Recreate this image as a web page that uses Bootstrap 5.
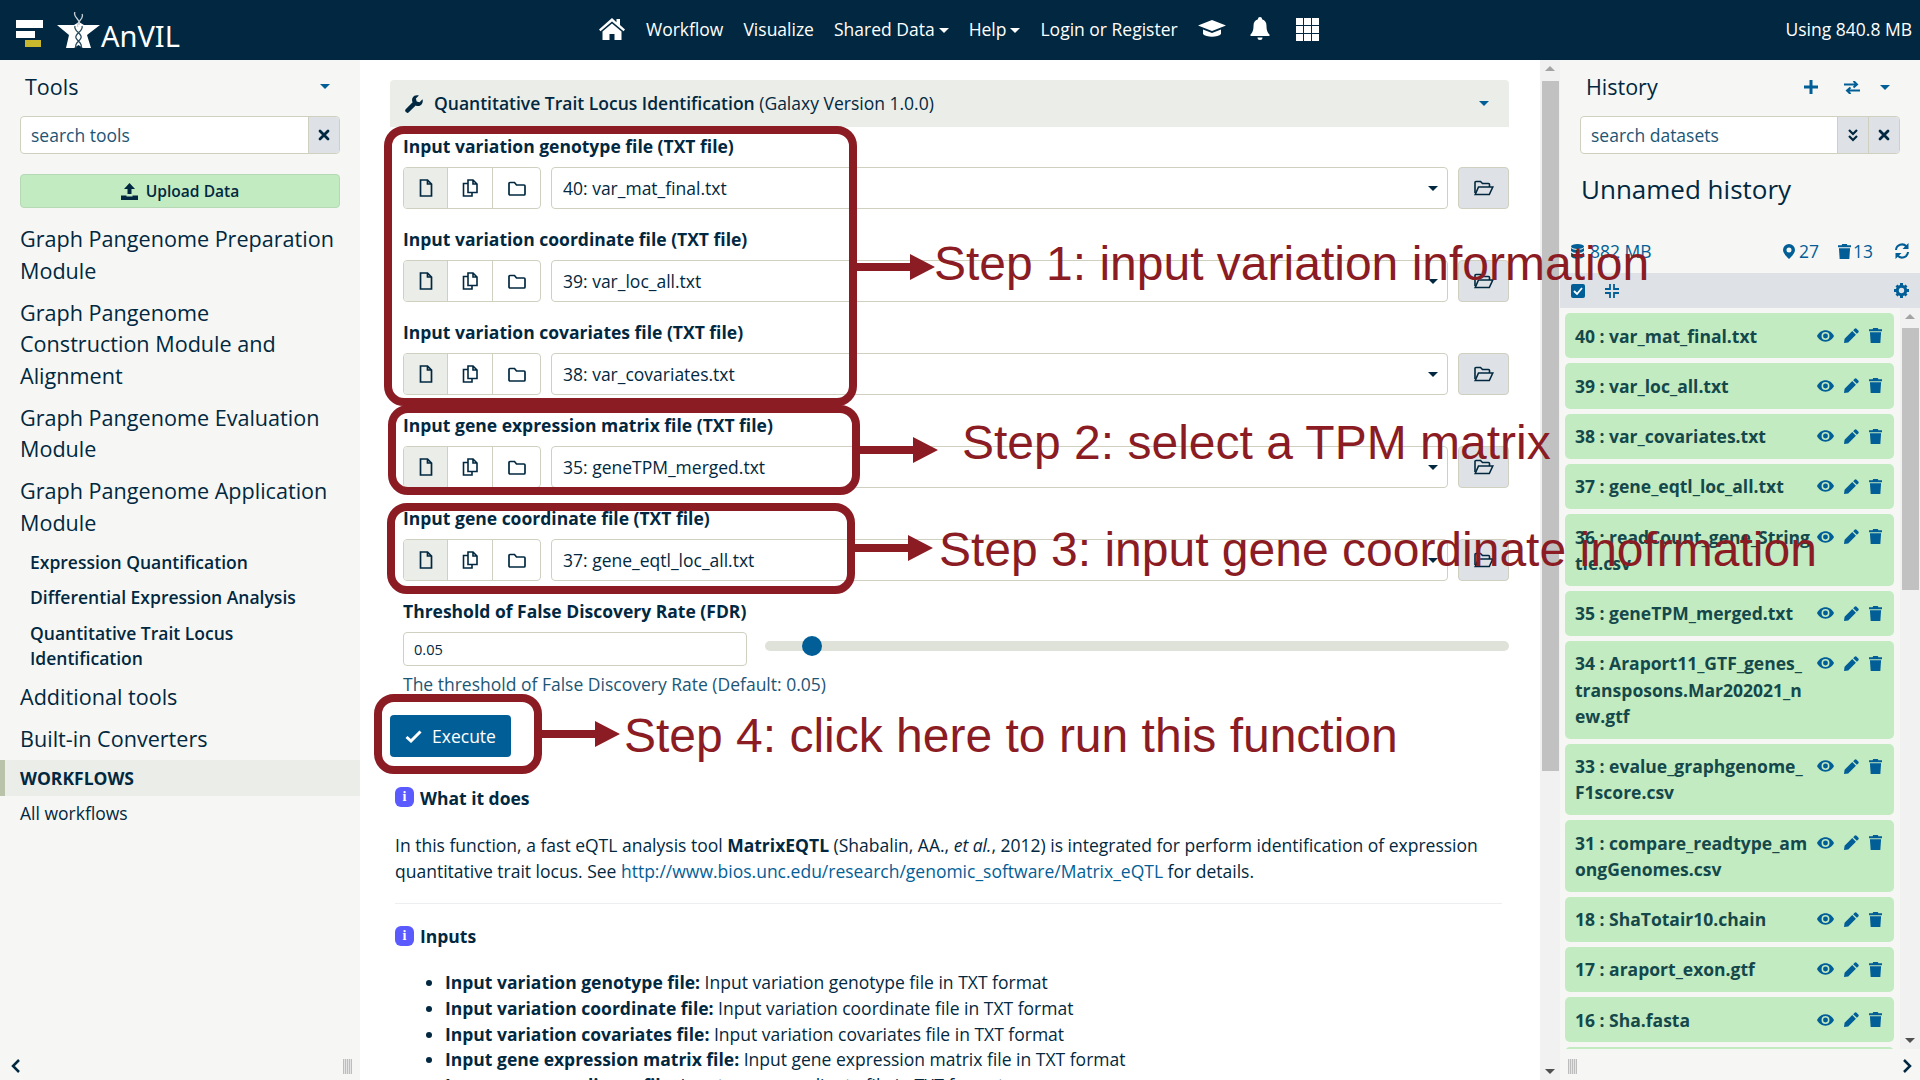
<!DOCTYPE html>
<html lang="en">
<head>
<meta charset="UTF-8">
<title>Galaxy</title>
<link href="https://cdn.jsdelivr.net/npm/bootstrap@5.3.0/dist/css/bootstrap.min.css" rel="stylesheet">
<style>
html, body { height: 100%; overflow: hidden; }
body { font-family: "Open Sans", "Noto Sans", sans-serif; font-size: 17.5px; line-height: 26.25px; color: #012840; background: #fff; }
svg { display: block; flex: none; }
a { text-decoration: none; }

/* masthead */
.top-bar { height: 60px; background: #012840; color: #fff; padding: 0 8px 0 16px; position: relative; }
.top-menu { position: absolute; left: 598px; top: 0; height: 58px; gap: 20px; }
.top-menu a { color: #fff; white-space: nowrap; }
.top-menu .grid-ico { margin-left: 6px; }
.top-used { margin-bottom: 2px; }
.caret-s { display: inline-block; width: 0; height: 0; border: 5px solid transparent; border-top-color: currentColor; border-bottom: 0; margin-left: 4px; vertical-align: 3px; }
.caret-blue { color: #025e96; margin: 0; }
.burger { margin-top: 20px; }
.logo-star { margin: 12px 0 0 13px; }
.logo-word { font-family: "Noto Sans", sans-serif; font-size: 29px; line-height: 30px; margin: 21px 0 0 0; color: #fff; }

.app-body { height: 1020px; }

/* side panels */
.side-l { width: 360px; background: #f6f7f4; position: relative; flex: none; }
.side-r { width: 360px; background: #f6f7f4; position: relative; flex: none; }
.panel-title { font-size: 21.5px; line-height: 28px; }
.panel-head-l { height: 56px; padding: 13px 30px 0 25px; }
.panel-head-l .caret-s { margin-top: 11px; }
.panel-head-r { height: 56px; padding: 13px 30px 0 26px; }
.hist-acts { padding-top: 7px; }
.hist-acts .act-swap { margin: 0 20px 0 26px; }
.search-box { height: 38px; margin: 0 20px; border: 1px solid #cfd0bf; border-radius: 4px; overflow: hidden; background: #fff; }
.search-box span.ph { flex: 1; padding: 5px 10px; color: #1d5575; }
.search-x { width: 31px; background: #dee2e6; border-left: 1px solid #cfd0bf; }
.up-btn { margin: 20px 20px 0; height: 34px; background: #c2ebc2; border: 1px solid #b4d9b4; border-radius: 4px; font-weight: 600; font-size: 15.6px; gap: 8px; }
.tool-tree { margin-top: 15px; }
.tool-sect { font-size: 21.6px; line-height: 31.5px; padding: 0 20px; margin-bottom: 10.5px; color: #012840; }
.tool-sub { font-weight: 600; line-height: 25px; padding: 0 20px 0 30px; margin-bottom: 10.5px; }
.tool-sub.first-sub { margin-top: 11.5px; }
.tool-sect.last-sect { margin-bottom: 5px; }
.wf-bar { height: 36px; background: #ebede8; border-left: 5px solid #b9c3a9; padding-left: 15px; font-weight: 700; line-height: 36px; }
.wf-link { padding: 4px 20px 0; }
.grip { width: 9px; height: 15px; background: repeating-linear-gradient(90deg, #bdbdbd 0 1px, #e4e4e4 1px 2px); }
.panel-foot { position: absolute; bottom: 6px; left: 11px; right: 8px; }
.panel-foot.foot-r { left: 8px; }

/* centre */
.centre { flex: 1; min-width: 0; position: relative; overflow: hidden; }
.centre-inner { padding: 20px 31px 0 30px; }
.tool-head { height: 47px; background: #ebede8; border-radius: 4px 4px 0 0; padding: 0 20px 0 15px; gap: 11px; }
.tool-head b { font-weight: 600; }
.field-wrap { padding: 7px 0 0 13px; }
.field-row { margin-bottom: 18px; }
.field-label { font-weight: 700; line-height: 24px; margin-bottom: 9px; }
.btn-trio { width: 138px; height: 42px; border: 1px solid #cfd0bf; border-radius: 4px; overflow: hidden; flex: none; }
.btn-trio span { flex: 1; border-left: 1px solid #cfd0bf; }
.btn-trio span:first-child { border-left: 0; background: #ebede8; flex: 0 0 43px; }
.btn-trio span:nth-child(2) { flex: 0 0 45px; }
.pick-box { flex: 1; height: 42px; border: 1px solid #cfd0bf; border-radius: 4px; margin-left: 10px; padding: 0 9px 0 11px; }
.open-btn { width: 51px; height: 42px; margin-left: 10px; background: #dee2e6; border: 1px solid #cfd0bf; border-radius: 4px; flex: none; }
.fdr-input { width: 344px; height: 34px; border: 1px solid #cfd0bf; border-radius: 4px; padding: 0 10px; font-size: 14.6px; line-height: 32px; }
.fdr-track { flex: 1; margin: 0 0 6px 18px; height: 10px; background: #dfe2d8; border-radius: 5px; position: relative; }
.fdr-thumb { position: absolute; left: 37px; top: -5px; width: 20px; height: 20px; border-radius: 50%; background: #025e96; }
.fdr-help { margin-top: 5px; line-height: 26px; color: #1d5575; }
.run-btn { margin-top: 18px; width: 121px; height: 42px; background: #025e96; border-radius: 4px; color: #fff; gap: 10px; }
.help-area { padding: 0 7px 0 5px; margin-top: 25px; line-height: 25.75px; }
.help-h { font-weight: 700; gap: 6px; }
.help-h.first-h { padding-top: 4px; }
.info-dot { width: 19px; height: 20px; border-radius: 6px; background: #5a5aff; color: #fff; font-size: 14px; font-weight: 700; line-height: 20px; text-align: center; font-family: "Liberation Serif", serif; margin-top: -3px; }
.help-area p { margin: 21px 0 0; }
.help-area a { color: #025e96; }
.help-area hr { margin: 19px 0 20px; border-color: #b8bcc2; }
.help-area ul { margin: 20px 0 0; padding-left: 50px; }
.help-area b { font-weight: 700; }

/* fake scrollbars */
.sbar { width: 20px; background: #f1f1f1; position: relative; flex: none; }
.sbar-up, .sbar-dn { position: absolute; left: 5px; width: 0; height: 0; border: 5px solid transparent; }
.sbar-up { top: 6px; border-bottom: 5px solid #a3a3a3; border-top: 0; }
.sbar-dn { bottom: 6px; border-top: 5px solid #505050; border-bottom: 0; }
.sbar-thumb { position: absolute; left: 2px; right: 1px; background: #c1c1c1; top: 21px; }
.thumb-main { height: 690px; }
.thumb-list { top: 20px; height: 262px; }

/* history */
.hist-name { font-size: 26px; line-height: 36px; padding-left: 21px; margin-top: 17px; }
.hist-stats { height: 26px; margin-top: 31px; padding: 0 10px 0 11px; color: #025e96; }
.hist-stats .sp-db { margin-left: 6px; }
.hist-stats .sp-n { margin-left: 4px; }
.hist-stats .sp-n2 { margin-left: 2px; }
.hist-stats .sp-gap { margin-left: 19px; }
.hist-stats .sp-gap2 { margin-left: 21px; }
.hist-tools { height: 35px; background: #dee2e6; margin-top: 9px; padding: 0 11px; }
.hist-tools .tool-compress { margin-left: 20px; }
.hist-scroll { height: 741px; overflow: hidden; }
.hist-list { flex: 1; padding: 5px 6px 0 5px; overflow: hidden; }
.ds-item { background: #c2ebc2; border-radius: 5px; padding: 9.5px 12px 9.5px 10px; margin-bottom: 5px; color: #14484a; font-weight: 700; gap: 9px; }
.ds-item.ds-empty { height: 45px; }
.ds-name { flex: 1; min-width: 0; white-space: nowrap; }
.ds-icons { height: 26px; gap: 10px; color: #025e96; }

/* annotations drawn over the page */
.mark-box { position: absolute; border: 8px solid #8b1c24; border-radius: 20px; pointer-events: none; }
.box-1 { left: 384px; top: 126px; width: 473px; height: 280px; }
.box-2 { left: 388px; top: 405px; width: 472px; height: 90px; }
.box-3 { left: 387px; top: 503px; width: 468px; height: 91px; }
.box-4 { left: 374px; top: 694px; width: 168px; height: 80px; }
.mark-text { position: absolute; font-family: "Liberation Sans", Arial, sans-serif; color: #8b1c24; font-size: 48px; line-height: 56px; white-space: nowrap; }
.txt-1 { left: 934px; top: 236px; }
.txt-2 { left: 962px; top: 415px; }
.txt-3 { left: 939px; top: 522px; }
.txt-4 { left: 624px; top: 708px; }
.mark-arrow { position: absolute; }
.arr-1 { left: 857px; top: 254px; }
.arr-2 { left: 860px; top: 437px; }
.arr-3 { left: 855px; top: 535px; }
.arr-4 { left: 542px; top: 721px; }
</style>
</head>
<body>

<svg width="0" height="0" class="position-absolute">
  <defs>
    <symbol id="i-file" viewBox="0 0 14 18"><path d="M1.500 1h7l4 4v12h-11z M8.500 1v4h4" fill="none" stroke="#012840" stroke-width="1.700"/></symbol>
    <symbol id="i-files" viewBox="0 0 16 18"><path d="M6 1h5l4 4v8.500H6z M11 1v4h4" fill="none" stroke="#012840" stroke-width="1.600"/><path d="M6 4.500H1.500v12.500H10v-3.500" fill="none" stroke="#012840" stroke-width="1.600"/></symbol>
    <symbol id="i-folder" viewBox="0 0 18 15"><path d="M1 2.500a1 1 0 0 1 1-1h4.500l2 2.500h7.500a1 1 0 0 1 1 1v8a1 1 0 0 1-1 1H2a1 1 0 0 1-1-1z" fill="none" stroke="#012840" stroke-width="1.700"/></symbol>
    <symbol id="i-open" viewBox="0 0 20 16"><path d="M1 13V2.500a1 1 0 0 1 1-1h4.500l2 2h6a1 1 0 0 1 1 1V7" fill="none" stroke="#012840" stroke-width="1.600"/><path d="M1.200 14.500 4.500 7h14.300l-3.500 7.500z" fill="none" stroke="#012840" stroke-width="1.600"/></symbol>
    <symbol id="i-eye" viewBox="0 0 18 12"><path d="M9 0C5 0 1.700 2.500 0 6c1.700 3.500 5 6 9 6s7.300-2.500 9-6c-1.700-3.500-5-6-9-6zm0 10.200A4.200 4.200 0 1 1 9 1.800a4.200 4.200 0 0 1 0 8.400zM9 3.400a2.600 2.600 0 1 0 0 5.200 2.600 2.600 0 0 0 0-5.200z" fill="#025e96"/></symbol>
    <symbol id="i-pen" viewBox="0 0 16 16"><path d="M11.300.8a1.500 1.500 0 0 1 2.100 0l1.800 1.800a1.500 1.500 0 0 1 0 2.100L13.700 6.200 9.800 2.300zM8.800 3.300l3.900 3.900L4.500 15.400 0 16l.6-4.500z" fill="#025e96"/></symbol>
    <symbol id="i-trash" viewBox="0 0 14 16"><path d="M4.500 0h5l.6 1.300H14v2H0v-2h3.900zM1 4.500h12L12.200 16H1.800z" fill="#025e96"/></symbol>
    <symbol id="i-x" viewBox="0 0 12 12"><path d="M2 2l8 8M10 2l-8 8" stroke="#012840" stroke-width="2.800" stroke-linecap="round"/></symbol>
    <symbol id="i-arrow" viewBox="0 0 78 26"><path d="M0 9h53V0l25 13-25 13v-9H0z" fill="#8b1c24"/></symbol>
  </defs>
</svg>

<nav class="top-bar d-flex">
  <svg width="28" height="28" viewBox="0 0 28 28" class="burger">
    <rect x="0" y="0" width="27" height="8" fill="#fff"/><rect x="0" y="11" width="19" height="7" fill="#fff"/><rect x="9" y="20" width="16" height="7" fill="#c9b82e"/>
  </svg>
  <svg width="44" height="38" viewBox="0 0 44 38" class="logo-star">
    <path d="M0 13h17l5-3 5 3h16L30 23l4 13h-8l-4.500-3-4.500 3H9l3-13z" fill="#fff"/>
    <path d="M18 0c-3 5 7 8 4 13M25 2c3 5-7 8-4 13" fill="none" stroke="#c9d2d8" stroke-width="1.300"/>
    <path d="M18 14c-2 5 8 8 6 12s-7 5-5 10M25 14c2 5-8 8-6 12s7 5 5 10" fill="none" stroke="#26485c" stroke-width="1.300"/>
  </svg>
  <span class="logo-word">AnVIL</span>
  <div class="top-menu d-flex align-items-center">
    <svg width="28" height="24" viewBox="0 0 28 24"><path d="M14 1 1 12.500l1.500 1.700L14 4.500l11.500 9.700 1.500-1.700-5-4.500V2h-3.500v3.200z M14 6.500 4.500 14.500V23h7v-6h5v6h7v-8.500z" fill="#fff"/></svg>
    <a href="#">Workflow</a>
    <a href="#">Visualize</a>
    <a href="#">Shared Data<span class="caret-s"></span></a>
    <a href="#">Help<span class="caret-s"></span></a>
    <a href="#">Login or Register</a>
    <svg width="28" height="20" viewBox="0 0 28 20"><path d="M14 1 0 6.500 14 12l14-5.500zM5 10.500v4.500c3 3.500 15 3.500 18 0v-4.500L14 14z" fill="#fff"/></svg>
    <svg width="20" height="24" viewBox="0 0 20 24" class="ms-1"><path d="M10 0a2 2 0 0 0-2 2.200C4.800 3 3.500 5.500 3.500 9c0 5-1.500 7-3 8.500V19h19v-1.500c-1.500-1.500-3-3.500-3-8.500 0-3.500-1.300-6-4.500-6.800A2 2 0 0 0 10 0zM7.500 20.500a2.500 2.500 0 0 0 5 0z" fill="#fff"/></svg>
    <svg width="23" height="23" viewBox="0 0 23 23" class="grid-ico"><path d="M0 0h7v7H0zM8 0h7v7H8zM16 0h7v7h-7zM0 8h7v7H0zM8 8h7v7H8zM16 8h7v7h-7zM0 16h7v7H0zM8 16h7v7H8zM16 16h7v7h-7z" fill="#fff"/></svg>
  </div>
  <span class="ms-auto align-self-center top-used">Using 840.8 MB</span>
</nav>

<div class="app-body d-flex">

  <aside class="side-l">
    <div class="panel-head-l d-flex justify-content-between align-items-start">
      <span class="panel-title">Tools</span>
      <span class="caret-s caret-blue"></span>
    </div>
    <div class="search-box d-flex">
      <span class="ph">search tools</span>
      <span class="search-x d-flex align-items-center justify-content-center"><svg width="12" height="12"><use href="#i-x"/></svg></span>
    </div>
    <div class="up-btn d-flex align-items-center justify-content-center">
      <svg width="17" height="17" viewBox="0 0 17 17"><path d="M8.500 0 14 6h-3.500v5h-4V6H3zM0 12.500h5.500v1h6v-1H17V17H0z" fill="#012840"/></svg>
      <span>Upload Data</span>
    </div>
    <div class="tool-tree">
      <div class="tool-sect">Graph Pangenome Preparation Module</div>
      <div class="tool-sect">Graph Pangenome Construction Module and Alignment</div>
      <div class="tool-sect">Graph Pangenome Evaluation Module</div>
      <div class="tool-sect">Graph Pangenome Application Module</div>
      <div class="tool-sub first-sub">Expression Quantification</div>
      <div class="tool-sub">Differential Expression Analysis</div>
      <div class="tool-sub">Quantitative Trait Locus Identification</div>
      <div class="tool-sect">Additional tools</div>
      <div class="tool-sect last-sect">Built-in Converters</div>
      <div class="wf-bar">WORKFLOWS</div>
      <div class="wf-link">All workflows</div>
    </div>
    <div class="panel-foot d-flex justify-content-between align-items-center">
      <svg width="10" height="16" viewBox="0 0 10 16"><path d="M8 2 2 8l6 6" fill="none" stroke="#012840" stroke-width="2.500"/></svg>
      <span class="grip"></span>
    </div>
  </aside>

  <main class="centre">
    <div class="centre-inner">
      <div class="tool-head d-flex align-items-center">
        <svg width="18" height="18" viewBox="0 0 18 18"><path d="M17.500 4.200 14.500 7.200l-2.800-.8-.8-2.800 3-3C11.500-.2 8.800.5 7.600 2.800c-.8 1.500-.7 3.200 0 4.500L.7 14.200a1.800 1.800 0 0 0 0 2.500l.6.600a1.800 1.800 0 0 0 2.500 0l6.900-6.900c1.400.7 3 .8 4.500 0 2.300-1.200 3-3.900 2.300-6.200z" fill="#012840"/></svg>
        <span><b>Quantitative Trait Locus Identification</b> (Galaxy Version 1.0.0)</span>
        <span class="caret-s caret-blue ms-auto"></span>
      </div>
      <div class="field-wrap" id="fieldWrap">
        <div class="field-label">Threshold of False Discovery Rate (FDR)</div>
        <div class="d-flex align-items-center">
          <div class="fdr-input">0.05</div>
          <div class="fdr-track"><span class="fdr-thumb"></span></div>
        </div>
        <div class="fdr-help">The threshold of False Discovery Rate (Default: 0.05)</div>
      </div>
      <div class="run-btn d-flex align-items-center justify-content-center">
        <svg width="17" height="13" viewBox="0 0 17 13"><path d="M1.500 7 6 11 15.500 1.500" fill="none" stroke="#fff" stroke-width="3"/></svg>
        <span>Execute</span>
      </div>
      <div class="help-area">
        <div class="help-h first-h d-flex align-items-center"><span class="info-dot">i</span><span>What it does</span></div>
        <p>In this function, a fast eQTL analysis tool <b>MatrixEQTL</b> (Shabalin, AA., <em>et al.</em>, 2012) is integrated for perform identification of expression quantitative trait locus. See <a href="#">http://www.bios.unc.edu/research/genomic_software/Matrix_eQTL</a> for details.</p>
        <hr>
        <div class="help-h d-flex align-items-center"><span class="info-dot">i</span><span>Inputs</span></div>
        <ul>
          <li><b>Input variation genotype file:</b> Input variation genotype file in TXT format</li>
          <li><b>Input variation coordinate file:</b> Input variation coordinate file in TXT format</li>
          <li><b>Input variation covariates file:</b> Input variation covariates file in TXT format</li>
          <li><b>Input gene expression matrix file:</b> Input gene expression matrix file in TXT format</li>
          <li><b>Input gene coordinate file:</b> Input gene coordinate file in TXT format</li>
        </ul>
      </div>
    </div>
  </main>

  <div class="sbar"><span class="sbar-up"></span><span class="sbar-thumb thumb-main"></span><span class="sbar-dn"></span></div>

  <aside class="side-r">
    <div class="panel-head-r d-flex align-items-start">
      <span class="panel-title">History</span>
      <div class="hist-acts d-flex align-items-center ms-auto">
        <svg width="14" height="14" viewBox="0 0 14 14"><path d="M7 0v14M0 7h14" stroke="#025e96" stroke-width="3"/></svg>
        <svg width="16" height="13" viewBox="0 0 16 13" class="act-swap"><path d="M0 3.500h12M9.500 0 13 3.500 9.500 6.500M16 9.500H4M6.500 6.500 3 9.500 6.500 13" fill="none" stroke="#025e96" stroke-width="2"/></svg>
        <span class="caret-s caret-blue"></span>
      </div>
    </div>
    <div class="search-box d-flex">
      <span class="ph">search datasets</span>
      <span class="search-x d-flex align-items-center justify-content-center"><svg width="12" height="13" viewBox="0 0 12 13"><path d="M2 1l4 4 4-4M2 7l4 4 4-4" fill="none" stroke="#012840" stroke-width="2.200"/></svg></span>
      <span class="search-x d-flex align-items-center justify-content-center"><svg width="12" height="12"><use href="#i-x"/></svg></span>
    </div>
    <div class="hist-name">Unnamed history</div>
    <div class="hist-stats d-flex align-items-center">
      <svg width="13" height="15" viewBox="0 0 13 15"><ellipse cx="6.500" cy="2.500" rx="6.500" ry="2.500" fill="#025e96"/><path d="M0 4c2 2.500 11 2.500 13 0v3c-2 2.500-11 2.500-13 0zM0 8.500c2 2.500 11 2.500 13 0v4c-2 3-11 3-13 0z" fill="#025e96"/></svg>
      <span class="sp-db">882 MB</span>
      <svg width="12" height="15" viewBox="0 0 12 15" class="ms-auto"><path d="M6 0a6 6 0 0 0-6 6c0 3.500 4 7 6 9 2-2 6-5.500 6-9a6 6 0 0 0-6-6zm0 8.500a2.500 2.500 0 1 1 0-5 2.500 2.500 0 0 1 0 5z" fill="#025e96"/></svg>
      <span class="sp-n">27</span>
      <svg width="13" height="15" class="sp-gap"><use href="#i-trash"/></svg>
      <span class="sp-n2">13</span>
      <svg width="16" height="16" viewBox="0 0 16 16" class="sp-gap2"><path d="M2 7a6 6 0 0 1 10.500-3.500M14 9a6 6 0 0 1-10.500 3.500" fill="none" stroke="#025e96" stroke-width="2"/><path d="M14.500 0v6h-6zM1.500 16v-6h6z" fill="#025e96"/></svg>
    </div>
    <div class="hist-tools d-flex align-items-center">
      <svg width="14" height="14" viewBox="0 0 14 14"><rect width="14" height="14" rx="2" fill="#025e96"/><path d="M3 7l3 3 5-6" fill="none" stroke="#fff" stroke-width="1.800"/></svg>
      <svg width="14" height="14" viewBox="0 0 14 14" class="tool-compress"><path d="M5 0v5H0M9 0v5h5M5 14V9H0M9 14V9h5" fill="none" stroke="#025e96" stroke-width="1.800"/></svg>
      <svg width="15" height="15" viewBox="0 0 15 15" class="ms-auto"><circle cx="7.500" cy="7.500" r="4.200" fill="none" stroke="#025e96" stroke-width="3"/><path d="M6 0h3v3H6zM6 12h3v3H6zM0 6h3v3H0zM12 6h3v3h-3zM1.500 3.500l2-2 2 2-2 2zM9.500 3.500l2-2 2 2-2 2zM1.500 11.500l2-2 2 2-2 2zM9.500 11.500l2-2 2 2-2 2z" fill="#025e96"/></svg>
    </div>
    <div class="hist-scroll d-flex">
      <div class="hist-list" id="dsList"></div>
      <div class="sbar"><span class="sbar-up"></span><span class="sbar-thumb thumb-list"></span><span class="sbar-dn"></span></div>
    </div>
    <div class="panel-foot foot-r d-flex justify-content-between align-items-center">
      <span class="grip"></span>
      <svg width="10" height="16" viewBox="0 0 10 16"><path d="M2 2l6 6-6 6" fill="none" stroke="#012840" stroke-width="2.500"/></svg>
    </div>
  </aside>
</div>

<!-- annotation layer -->
<div class="mark-box box-1"></div>
<div class="mark-box box-2"></div>
<div class="mark-box box-3"></div>
<div class="mark-box box-4"></div>
<svg class="mark-arrow arr-1" width="78" height="26"><use href="#i-arrow"/></svg>
<svg class="mark-arrow arr-2" width="78" height="26"><use href="#i-arrow"/></svg>
<svg class="mark-arrow arr-3" width="78" height="26"><use href="#i-arrow"/></svg>
<svg class="mark-arrow arr-4" width="78" height="26"><use href="#i-arrow"/></svg>
<div class="mark-text txt-1">Step 1: input variation information</div>
<div class="mark-text txt-2">Step 2: select a TPM matrix</div>
<div class="mark-text txt-3">Step 3: input gene coordinate inofrmation</div>
<div class="mark-text txt-4">Step 4: click here to run this function</div>

<script src="https://cdn.jsdelivr.net/npm/bootstrap@5.3.0/dist/js/bootstrap.bundle.min.js"></script>
<script>
  // tool form rows
  const fields = [
    ["Input variation genotype file (TXT file)", "40: var_mat_final.txt"],
    ["Input variation coordinate file (TXT file)", "39: var_loc_all.txt"],
    ["Input variation covariates file (TXT file)", "38: var_covariates.txt"],
    ["Input gene expression matrix file (TXT file)", "35: geneTPM_merged.txt"],
    ["Input gene coordinate file (TXT file)", "37: gene_eqtl_loc_all.txt"]
  ];
  const cell = 'class="d-flex align-items-center justify-content-center"';
  document.getElementById("fieldWrap").insertAdjacentHTML("afterbegin", fields.map(f =>
    '<div class="field-row"><div class="field-label">' + f[0] + '</div><div class="d-flex">' +
    '<div class="btn-trio d-flex"><span ' + cell + '><svg width="14" height="18"><use href="#i-file"/></svg></span>' +
    '<span ' + cell + '><svg width="16" height="18"><use href="#i-files"/></svg></span>' +
    '<span ' + cell + '><svg width="18" height="15"><use href="#i-folder"/></svg></span></div>' +
    '<div class="pick-box d-flex align-items-center"><span>' + f[1] + '</span><span class="caret-s ms-auto"></span></div>' +
    '<div class="open-btn d-flex align-items-center justify-content-center"><svg width="20" height="16"><use href="#i-open"/></svg></div>' +
    '</div></div>').join(""));

  // history rows, wrapped where the panel wraps them
  const rows = ["40 : var_mat_final.txt", "39 : var_loc_all.txt", "38 : var_covariates.txt", "37 : gene_eqtl_loc_all.txt",
    "36 : readCount_gene_String<br>tie.csv", "35 : geneTPM_merged.txt", "34 : Araport11_GTF_genes_<br>transposons.Mar202021_n<br>ew.gtf",
    "33 : evalue_graphgenome_<br>F1score.csv", "31 : compare_readtype_am<br>ongGenomes.csv", "18 : ShaTotair10.chain",
    "17 : araport_exon.gtf", "16 : Sha.fasta"];
  document.getElementById("dsList").innerHTML = rows.map(r =>
    '<div class="ds-item d-flex"><div class="ds-name">' + r + '</div><div class="ds-icons d-flex align-items-center">' +
    '<svg width="17" height="12"><use href="#i-eye"/></svg>' +
    '<svg width="15" height="15"><use href="#i-pen"/></svg>' +
    '<svg width="13" height="15"><use href="#i-trash"/></svg></div></div>').join("") + '<div class="ds-item ds-empty"></div>';
</script>
</body>
</html>
